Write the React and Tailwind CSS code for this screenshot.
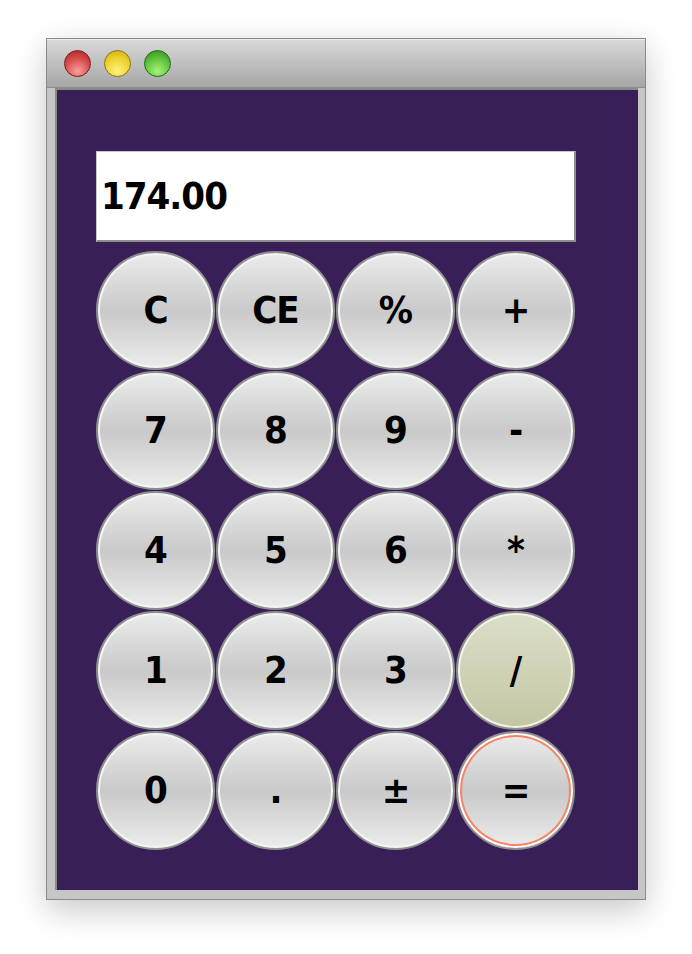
import React from 'react';

const keys = [
  'C', 'CE', '%', '+',
  '7', '8', '9', '-',
  '4', '5', '6', '*',
  '1', '2', '3', '/',
  '0', '.', '±', '=',
];

const font = { fontFamily: '"DejaVu Sans Condensed", "DejaVu Sans", Verdana, sans-serif' };

function Key({ label }) {
  const base =
    'w-[119px] h-[119px] rounded-full border-2 border-[#8e8e8e] flex items-center justify-center text-[38px] font-bold text-black tracking-[-1px]';
  if (label === '/') {
    return (
      <button
        className={`${base} bg-[linear-gradient(to_bottom,#dcdfc8,#c3c6a3)] shadow-[inset_0_0_0_2px_#f3f3ea]`}
        style={font}
      >
        /
      </button>
    );
  }
  if (label === '=') {
    return (
      <button
        className={`${base} bg-[linear-gradient(to_bottom,#ececec,#c9c9c9_50%,#ececec)] shadow-[inset_0_0_0_2px_#ffffff,inset_0_0_0_4px_#f58566]`}
        style={font}
      >
        =
      </button>
    );
  }
  return (
    <button
      className={`${base} bg-[linear-gradient(to_bottom,#ececec,#c9c9c9_50%,#ececec)] shadow-[inset_0_0_0_2px_#f4f4f4]`}
      style={font}
    >
      {label}
    </button>
  );
}

export default function App() {
  return (
    <div className="min-h-screen bg-white pt-[38px] pl-[46px]">
      <div className="w-[600px] h-[862px] border border-[#8a8a8a] bg-[#c6c6c6] flex flex-col shadow-[0_10px_30px_rgba(0,0,0,0.22)]">
        <div className="h-[48px] bg-[linear-gradient(to_bottom,#d8d8d8,#a6a6a6)] flex items-center gap-[13px] pl-[17px] border-t border-[#ededed]">
          <span className="w-[27px] h-[27px] rounded-full border border-[#7a1d1d] bg-[radial-gradient(circle_at_50%_80%,#f7a0a0,#d64a4a_55%,#a82222)]" />
          <span className="w-[27px] h-[27px] rounded-full border border-[#8a7410] bg-[radial-gradient(circle_at_50%_80%,#fff27a,#ecd22e_55%,#c8a812)]" />
          <span className="w-[27px] h-[27px] rounded-full border border-[#1f6a14] bg-[radial-gradient(circle_at_50%_80%,#a8f27a,#5cc23a_55%,#2f8a1e)]" />
        </div>
        <div className="flex-1 pl-[8px] pr-[7px] pb-[9px] border-t border-[#8e8e8e]">
          <div className="h-full bg-[#381f58] border-l-2 border-t-2 border-[#8a8a8a] pl-[39px] pt-[61px]">
            <div
              className="w-[480px] h-[91px] bg-white border border-[#c8c8c8] border-r-2 border-b-2 border-r-[#8e8e8e] border-b-[#8e8e8e] flex items-center pl-[4px] text-[38px] font-bold text-black tracking-[-1px]"
              style={font}
            >
              174.00
            </div>
            <div className="mt-[9px] grid grid-cols-[repeat(4,119px)] gap-[1px]">
              {keys.map((k) => (
                <Key key={k} label={k} />
              ))}
            </div>
          </div>
        </div>
      </div>
    </div>
  );
}
